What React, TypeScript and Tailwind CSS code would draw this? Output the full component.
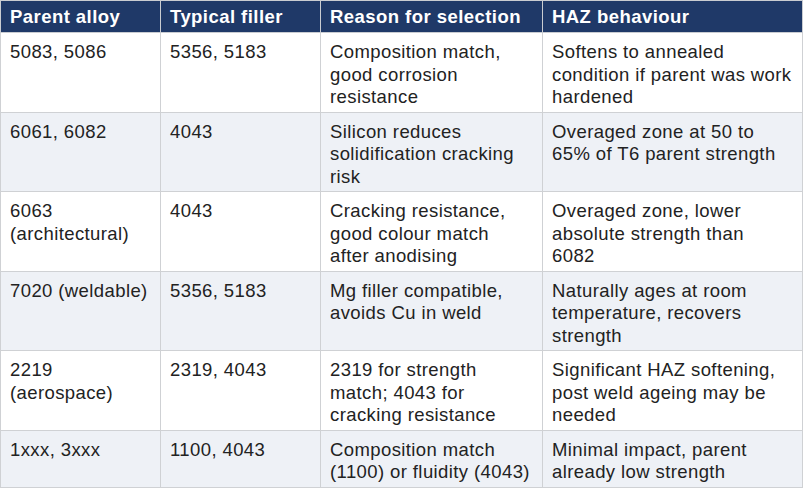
const rows = [
  ["5083, 5086", "5356, 5183", "Composition match, good corrosion resistance", "Softens to annealed condition if parent was work hardened"],
  ["6061, 6082", "4043", "Silicon reduces solidification cracking risk", "Overaged zone at 50 to 65% of T6 parent strength"],
  ["6063 (architectural)", "4043", "Cracking resistance, good colour match\nafter anodising", "Overaged zone, lower absolute strength than\n6082"],
  ["7020 (weldable)", "5356, 5183", "Mg filler compatible, avoids Cu in weld", "Naturally ages at room temperature, recovers strength"],
  ["2219 (aerospace)", "2319, 4043", "2319 for strength match; 4043 for cracking resistance", "Significant HAZ softening, post weld ageing may be needed"],
  ["1xxx, 3xxx", "1100, 4043", "Composition match (1100) or fluidity (4043)", "Minimal impact, parent already low strength"],
];

const headers = ["Parent alloy", "Typical filler", "Reason for selection", "HAZ behaviour"];

export default function App() {
  return (
    <div className="w-[803px] h-[488px] overflow-hidden bg-white font-['Liberation_Sans',Arial,sans-serif]">
      <table className="w-[802px] table-fixed border-collapse">
        <colgroup>
          <col className="w-[160px]" />
          <col className="w-[160px]" />
          <col className="w-[222px]" />
          <col className="w-[260px]" />
        </colgroup>
        <thead>
          <tr className="bg-[#1f3968] h-[32px]">
            {headers.map((h) => (
              <th
                key={h}
                className="border border-[#c9ccd1] px-[9px] py-0 text-left text-[18.5px] leading-[22px] tracking-[0.45px] font-bold text-white"
              >
                {h}
              </th>
            ))}
          </tr>
        </thead>
        <tbody>
          {rows.map((r, i) => (
            <tr key={i} className={i % 2 === 1 ? "bg-[#eef1f6]" : "bg-white"}>
              {r.map((c, j) => (
                <td
                  key={j}
                  className="border border-[#cfd1d4] pl-[9px] pr-[6px] pt-[8px] pb-[3px] align-top whitespace-pre-line text-[18.5px] leading-[22.5px] tracking-[0.4px] text-[#222]"
                >
                  {c}
                </td>
              ))}
            </tr>
          ))}
        </tbody>
      </table>
    </div>
  );
}
